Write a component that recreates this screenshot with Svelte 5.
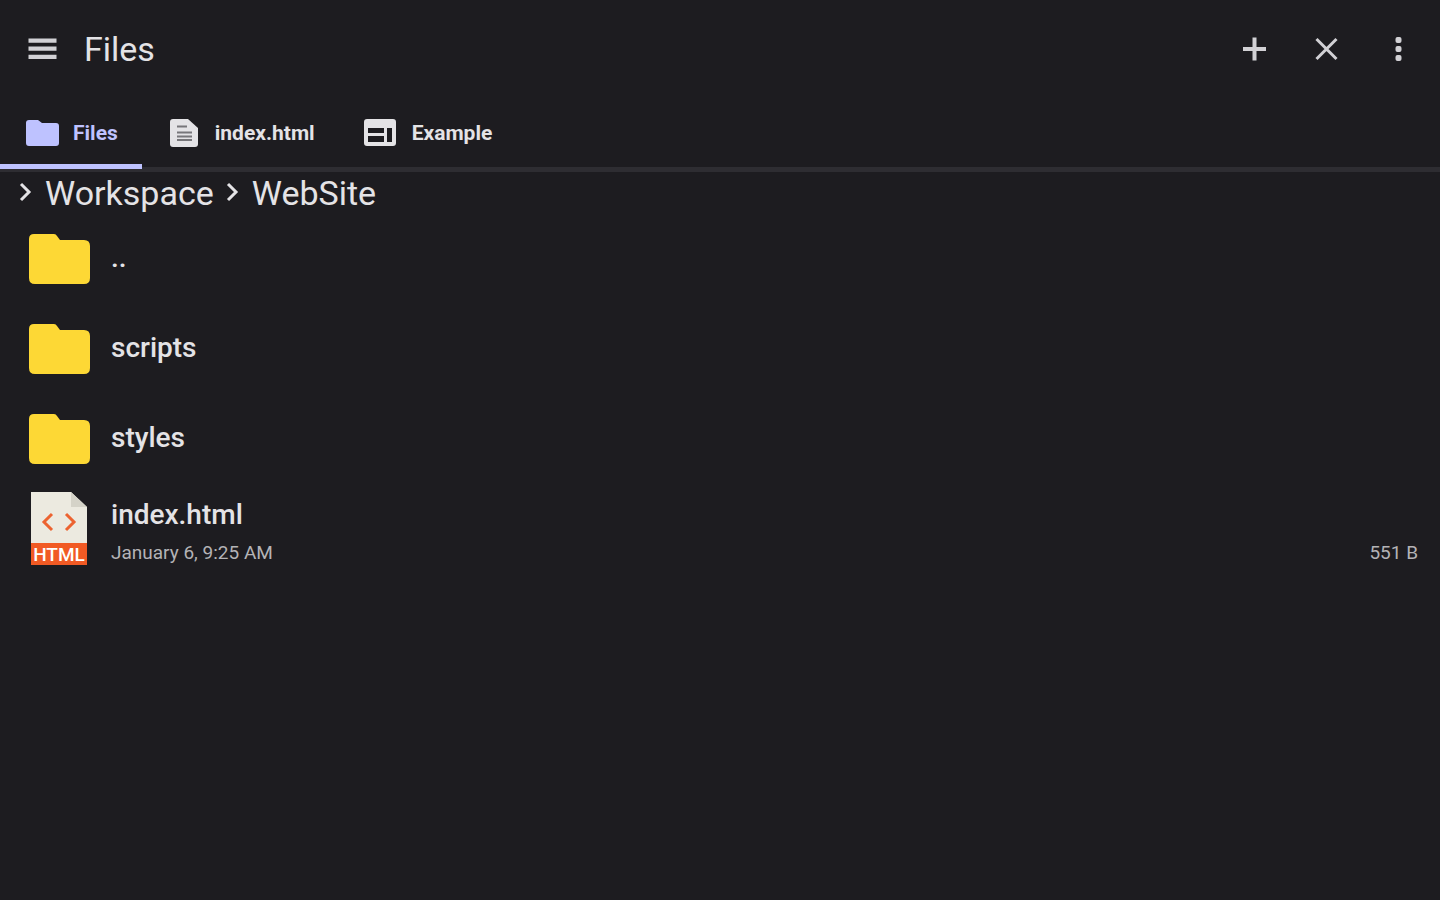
<script lang="ts">
  type Icon = 'folder' | 'document' | 'web';

  const tabs: { label: string; icon: Icon }[] = [
    { label: 'Files', icon: 'folder' },
    { label: 'index.html', icon: 'document' },
    { label: 'Example', icon: 'web' },
  ];

  const path = ['Workspace', 'WebSite'];

  const entries = [
    { name: '..', folder: true },
    { name: 'scripts', folder: true },
    { name: 'styles', folder: true },
    { name: 'index.html', folder: false, date: 'January 6, 9:25 AM', size: '551 B' },
  ];

  let active = $state(0);
</script>

<header>
  <button class="menu" aria-label="Menu">
    <svg width="36" height="36" viewBox="0 0 36 36">
      <path d="M4.500 7.500h28v4.200h-28zM4.500 15.600h28v4.200h-28zM4.500 23.700h28v4.200h-28z" />
    </svg>
  </button>
  <h1>Files</h1>
  <button aria-label="New">
    <svg width="36" height="36" viewBox="0 0 36 36">
      <path d="M16.500 6.500h4V16H30v4h-9.500v9.500h-4V20H7v-4h9.500z" />
    </svg>
  </button>
  <button aria-label="Close">
    <svg width="36" height="36" viewBox="0 0 36 36">
      <path d="M8.500 8l20 20M28.500 8l-20 20" fill="none" stroke="currentColor" stroke-width="3" />
    </svg>
  </button>
  <button aria-label="More">
    <svg width="36" height="36" viewBox="0 0 36 36">
      <rect x="15.500" y="6" width="6" height="6" rx="2" />
      <rect x="15.500" y="15" width="6" height="6" rx="2" />
      <rect x="15.500" y="24" width="6" height="6" rx="2" />
    </svg>
  </button>
</header>

<nav class="tabs">
  {#each tabs as tab, i}
    <button class="tab" class:active={active === i} onclick={() => (active = i)}>
      <svg width="36" height="36" viewBox="0 0 36 36">
        {#if tab.icon === 'folder'}
          <path d="M5 5h9l4 3h14q3 0 3 3v17q0 3-3 3H5q-3 0-3-3V8q0-3 3-3z" />
        {:else if tab.icon === 'document'}
          <path d="M7 4h15l10 9v16q0 3-3 3H7q-3 0-3-3V7q0-3 3-3z" />
          <path class="lines" d="M11 11.500h10M11 17.500h15M11 21.500h15M11 25h15" />
        {:else}
          <path fill-rule="evenodd" d="M4 4h26q3 0 3 3v21q0 3-3 3H4q-3 0-3-3V7q0-3 3-3zM5 13v5h16v-5zM5 21v6h16v-6zM24 13v14h5V13z" />
        {/if}
      </svg>
      {tab.label}
    </button>
  {/each}
</nav>

<main>
  <nav class="path" aria-label="Path">
    {#each path as part}
      <svg width="16" height="24" viewBox="0 0 16 24">
        <path d="M3 3l8 8-8 8" fill="none" stroke="currentColor" stroke-width="3" />
      </svg>
      <a href="#{part}">{part}</a>
    {/each}
  </nav>

  <ul>
    {#each entries as entry}
      <li>
        {#if entry.folder}
          <svg width="64" height="76" viewBox="0 0 64 76">
            <path
              fill="#fdd835"
              d="M7 13h20q2 0 3 2l3 4h24q6 0 6 6v32q0 6-6 6H8q-6 0-6-6V18q0-5 5-5z"
            />
          </svg>
        {:else}
          <svg width="64" height="76" viewBox="0 0 64 76">
            <path fill="#eceae0" d="M4 1h40l16 15v36H4z" />
            <path fill="#d5d3c8" d="M44 1l16 15H44z" />
            <path fill="#f15a24" d="M4 52h56v22H4z" />
            <path d="M25 23l-8 8 8 8M39 23l8 8-8 8" fill="none" stroke="#ec6330" stroke-width="3" />
            <text x="32" y="70" text-anchor="middle">HTML</text>
          </svg>
        {/if}
        <div class="info" class:file={!entry.folder}>
          <span class="name">{entry.name}</span>
          {#if entry.date}
            <div class="details">
              <span>{entry.date}</span>
              <span>{entry.size}</span>
            </div>
          {/if}
        </div>
      </li>
    {/each}
  </ul>
</main>

<style>
  :global(body) {
    background: #1d1c20;
    color: #e4e3e6;
    font-family: Roboto, sans-serif;
  }

  button {
    border: none;
    background: none;
    color: inherit;
    font-family: inherit;
    padding: 0;
    cursor: pointer;
  }

  svg {
    display: block;
    fill: currentColor;
    flex-shrink: 0;
  }

  header {
    display: flex;
    align-items: center;
    gap: 36px;
    height: 98px;
    padding: 0 24px;
    box-sizing: border-box;
  }
  header button {
    color: #d2d1d5;
  }
  .menu {
    margin-right: -12px;
  }
  h1 {
    flex: 1;
    margin: 0;
    font-size: 34px;
    line-height: 40px;
    font-weight: 400;
  }

  .tabs {
    display: flex;
    height: 74px;
    box-sizing: border-box;
    border-bottom: 5px solid #2e2d32;
  }
  .tab {
    display: flex;
    align-items: center;
    gap: 13px;
    height: 71px;
    padding: 3px 24px 0;
    box-sizing: border-box;
    border-bottom: 5px solid transparent;
    font-size: 21px;
    font-weight: 700;
  }
  .tab.active {
    color: #bec2ff;
    border-bottom-color: #bec2ff;
  }
  .lines {
    fill: none;
    stroke: #77767a;
    stroke-width: 2;
  }

  .path {
    display: flex;
    align-items: center;
    gap: 11px;
    height: 42px;
    padding: 0 18px;
    font-size: 34px;
    line-height: 40px;
  }
  .path a {
    color: inherit;
    text-decoration: none;
  }

  ul {
    margin: 0;
    padding: 0;
    list-style: none;
  }
  li {
    display: flex;
    align-items: center;
    gap: 20px;
    height: 90px;
    padding: 0 22px 0 27px;
  }
  li text {
    fill: #fff;
    font-size: 19px;
    font-weight: 500;
  }
  .info {
    flex: 1;
    padding-bottom: 2px;
  }
  .info.file {
    padding: 12px 0 0;
  }
  .name {
    display: block;
    font-size: 28px;
    line-height: 36px;
    font-weight: 500;
  }
  .details {
    display: flex;
    justify-content: space-between;
    color: #b4b3b6;
    font-size: 19px;
    line-height: 40px;
  }
</style>
